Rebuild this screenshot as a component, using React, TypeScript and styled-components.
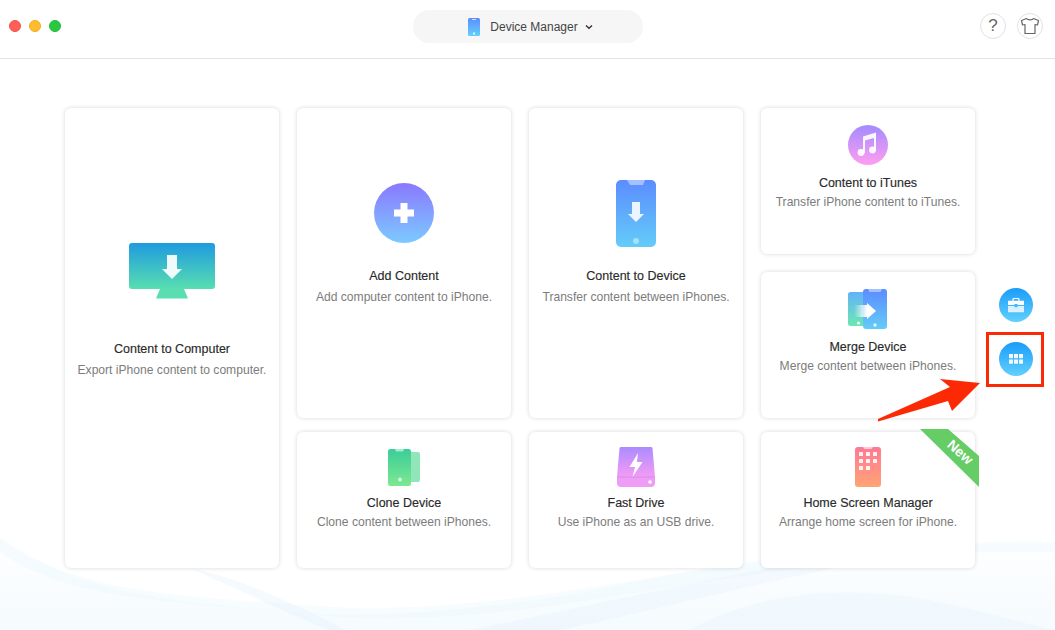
import React from "react";
import styled, { createGlobalStyle } from "styled-components";

const GlobalStyle = createGlobalStyle`
  html, body {
    margin: 0;
    padding: 0;
    background: #fff;
    font-family: "Liberation Sans", Arial, sans-serif;
  }
`;

const Page = styled.div`
  position: relative;
  width: 1055px;
  height: 630px;
  overflow: hidden;
  background: #fff;
`;

const Waves = styled.svg`
  position: absolute;
  left: 0;
  bottom: 0;
  width: 1055px;
  height: 130px;
`;

const TitleBar = styled.header`
  position: relative;
  height: 58px;
  border-bottom: 1px solid #e4e4e4;
  padding: 0 10px 0 11px;
  display: grid;
  grid-template-columns: 1fr 230px 1fr;
  align-items: center;
`;

const TrafficLights = styled.div`
  display: flex;
  gap: 8px;
  margin: -6px 0 0 -2px;
`;

const Light = styled.span<{ $color: string; $edge: string }>`
  width: 12px;
  height: 12px;
  border-radius: 50%;
  box-sizing: border-box;
  background: ${(p) => p.$color};
  border: 1px solid ${(p) => p.$edge};
`;

const Switcher = styled.div`
  height: 33px;
  margin-top: -6px;
  padding: 1px 0 0 5px;
  box-sizing: border-box;
  border-radius: 16px;
  background: #f6f6f6;
  display: flex;
  align-items: center;
  justify-content: center;
  gap: 10px;
  color: #444;
  font-size: 12px;
`;

const ChevronWrap = styled.span`
  display: flex;
  margin-left: -3px;
`;

const ToolButtons = styled.div`
  display: flex;
  justify-content: flex-end;
  gap: 11px;
  margin: -6px 2px 0 0;
`;

const RoundButton = styled.div`
  width: 26px;
  height: 26px;
  box-sizing: border-box;
  border: 1px solid #e2e2e2;
  border-radius: 50%;
  display: flex;
  align-items: center;
  justify-content: center;
  color: #666;
  font-size: 17px;
`;

const Main = styled.main`
  position: relative;
  display: flex;
  gap: 24px;
  padding: 49px 0 0 65px;
`;

const CardGrid = styled.div`
  display: grid;
  grid-template-columns: repeat(4, 214px);
  grid-template-rows: 146px 18px 146px 14px 136px;
  column-gap: 18px;
`;

const Card = styled.section<{ $rows: string; $column: number; $top: number }>`
  position: relative;
  grid-row: ${(p) => p.$rows};
  grid-column: ${(p) => p.$column};
  padding-top: ${(p) => p.$top}px;
  box-sizing: border-box;
  background: #fff;
  border-radius: 6px;
  box-shadow: 0 0 4px rgba(0, 0, 0, 0.16);
  display: flex;
  flex-direction: column;
  align-items: center;
  text-align: center;
`;

const CardTitle = styled.h3<{ $gap: number }>`
  margin: ${(p) => p.$gap}px 0 0;
  color: #2a2a2a;
  font-size: 12.5px;
  line-height: 16px;
  font-weight: 400;
  white-space: nowrap;
  -webkit-text-stroke: 0.15px #2a2a2a;
`;

const CardText = styled.p<{ $gap: number }>`
  margin: ${(p) => p.$gap}px 0 0;
  color: #7c7c7c;
  font-size: 12.1px;
  line-height: 16px;
  white-space: nowrap;
`;

const Ribbon = styled.div`
  position: absolute;
  top: -3px;
  right: -4px;
  width: 59px;
  height: 58px;
  background: #66cc66;
  clip-path: polygon(0 0, 28px 0, 59px 27px, 59px 58px);
`;

const RibbonLabel = styled.span`
  position: absolute;
  left: 26px;
  top: 15px;
  color: #fff;
  font-size: 14px;
  font-weight: 700;
  transform: rotate(42deg);
`;

const SideColumn = styled.aside`
  display: flex;
  flex-direction: column;
  gap: 20px;
  padding-top: 180px;
`;

const SideButton = styled.div<{ $highlighted?: boolean }>`
  position: relative;
  width: 34px;
  height: 34px;
  border-radius: 50%;
  background: linear-gradient(#1a9cf8, #62d0ff);
  display: flex;
  align-items: center;
  justify-content: center;

  ${(p) =>
    p.$highlighted &&
    `
    &::after {
      content: "";
      position: absolute;
      inset: -10px -11px -11px -13px;
      border: 3px solid #fb2a05;
    }
  `}
`;

const RedArrow = styled.svg`
  position: absolute;
  left: 878px;
  top: 379px;
  width: 102px;
  height: 43px;
`;

const DeviceIcon = () => (
  <svg width="12" height="18" viewBox="0 0 12 18">
    <defs>
      <linearGradient id="dev" x1="0" y1="0" x2="0" y2="1">
        <stop offset="0" stopColor="#5b8cff" />
        <stop offset="1" stopColor="#64d0fa" />
      </linearGradient>
    </defs>
    <rect width="12" height="18" rx="1.5" fill="url(#dev)" />
    <rect x="4" y="1" width="4" height="1" fill="#cfe0ff" />
    <rect x="5" y="14.5" width="2" height="2" fill="#e6f6ff" />
  </svg>
);

const Chevron = () => (
  <svg width="8" height="6" viewBox="0 0 8 6">
    <path d="M1 1.5 4 4.3 7 1.5" fill="none" stroke="#333" strokeWidth="1.4" />
  </svg>
);

const ShirtIcon = () => (
  <svg width="20" height="18" viewBox="0 0 20 18">
    <path
      d="M6.5 1.5 1.5 3.5 2.5 8 5 7.5V16.5H15V7.5L17.5 8 18.5 3.5 13.5 1.5C12.5 3.4 7.5 3.4 6.5 1.5Z"
      fill="none"
      stroke="#666"
      strokeWidth="1.2"
      strokeLinejoin="round"
    />
  </svg>
);

const ComputerIcon = () => (
  <svg width="86" height="56" viewBox="0 0 86 56">
    <defs>
      <linearGradient id="pc" x1="0" y1="0" x2="0" y2="1">
        <stop offset="0" stopColor="#1f9bdf" />
        <stop offset="1" stopColor="#58deb0" />
      </linearGradient>
    </defs>
    <rect width="86" height="46" rx="3" fill="url(#pc)" />
    <path d="M31 46H55L59 55.5H27Z" fill="#58deb0" />
    <path d="M38 12H48V26H53L43 36 33 26H38Z" fill="#fff" fillOpacity="0.92" />
  </svg>
);

const PlusIcon = () => (
  <svg width="60" height="60" viewBox="0 0 60 60">
    <defs>
      <linearGradient id="plus" x1="0" y1="0" x2="0" y2="1">
        <stop offset="0" stopColor="#8a78ff" />
        <stop offset="1" stopColor="#7ccaff" />
      </linearGradient>
    </defs>
    <circle cx="30" cy="30" r="30" fill="url(#plus)" />
    <path d="M26.5 20h7v6.5H40v7h-6.5V40h-7v-6.5H20v-7h6.5Z" fill="#fff" />
  </svg>
);

const PhoneIcon = () => (
  <svg width="40" height="67" viewBox="0 0 40 67">
    <defs>
      <linearGradient id="phone" x1="0" y1="0" x2="0" y2="1">
        <stop offset="0" stopColor="#5b8cff" />
        <stop offset="1" stopColor="#64ccf8" />
      </linearGradient>
    </defs>
    <rect width="40" height="67" rx="5" fill="url(#phone)" />
    <path d="M11 0H29L27 5H14Z" fill="#a4c0ff" />
    <path d="M16 22H24V34H28L20 42 12 34H16Z" fill="#fff" fillOpacity="0.88" />
    <circle cx="20" cy="61" r="3" fill="#a2e2fc" />
  </svg>
);

const MusicIcon = () => (
  <svg width="40" height="40" viewBox="0 0 40 40">
    <defs>
      <linearGradient id="music" x1="0" y1="0" x2="0" y2="1">
        <stop offset="0" stopColor="#a38bff" />
        <stop offset="1" stopColor="#ff9ef0" />
      </linearGradient>
    </defs>
    <circle cx="20" cy="20" r="20" fill="url(#music)" />
    <path d="M15 11.5 28 7.5V25H26V13L17 15.6V28H15Z" fill="#fff" fillOpacity="0.92" />
    <circle cx="13" cy="27.5" r="3.4" fill="#fff" fillOpacity="0.92" />
    <circle cx="24.5" cy="25" r="3.4" fill="#fff" fillOpacity="0.92" />
  </svg>
);

const MergeIcon = () => (
  <svg width="40" height="40" viewBox="0 0 40 40">
    <defs>
      <linearGradient id="mergeBack" x1="0" y1="0" x2="0" y2="1">
        <stop offset="0" stopColor="#62b2fa" />
        <stop offset="1" stopColor="#6ce8b0" />
      </linearGradient>
      <linearGradient id="mergeFront" x1="0" y1="0" x2="0" y2="1">
        <stop offset="0" stopColor="#5b8cff" />
        <stop offset="1" stopColor="#64ccf8" />
      </linearGradient>
      <linearGradient id="mergeFade" x1="0" y1="0" x2="1" y2="0">
        <stop offset="0" stopColor="#fff" stopOpacity="0" />
        <stop offset="1" stopColor="#fff" />
      </linearGradient>
    </defs>
    <rect y="3" width="18" height="34" rx="2.5" fill="url(#mergeBack)" />
    <circle cx="10.5" cy="34" r="1.6" fill="#e8fff5" />
    <rect x="15" width="24" height="40" rx="3" fill="url(#mergeFront)" />
    <path d="M20 0H34L32.5 3H21.5Z" fill="#a4c0ff" />
    <path d="M6 16H19V28H6Z" fill="url(#mergeFade)" />
    <path d="M19 14V30L28 22Z" fill="#fff" />
    <circle cx="27" cy="36" r="1.7" fill="#e2f6ff" />
  </svg>
);

const CloneIcon = () => (
  <svg width="32" height="38" viewBox="0 0 32 38">
    <defs>
      <linearGradient id="clone" x1="0" y1="0" x2="0" y2="1">
        <stop offset="0" stopColor="#3acd98" />
        <stop offset="1" stopColor="#7ee890" />
      </linearGradient>
    </defs>
    <rect x="18" y="3" width="14" height="30" rx="2" fill="#90e6b8" />
    <rect width="23" height="37" rx="2.5" fill="url(#clone)" />
    <path d="M7 0H16L15 2.5H8Z" fill="#a8ecd0" />
    <circle cx="12" cy="30.5" r="2" fill="#d8f8e4" />
  </svg>
);

const DriveIcon = () => (
  <svg width="38" height="40" viewBox="0 0 38 40">
    <defs>
      <linearGradient id="drive" x1="0" y1="0" x2="0" y2="1">
        <stop offset="0" stopColor="#ab8bff" />
        <stop offset="1" stopColor="#f49cf4" />
      </linearGradient>
    </defs>
    <path d="M4 0H34C35 0 35.4 .6 35.5 1.5L38 30H0L2.5 1.5C2.6 .6 3 0 4 0Z" fill="url(#drive)" />
    <path d="M0 30H38V36C38 38.5 36.5 40 34 40H4C1.5 40 0 38.5 0 36Z" fill="#ee9cf6" />
    <path d="M0 30H38" stroke="#c98bf0" strokeWidth="0.8" />
    <circle cx="33" cy="35" r="1.8" fill="#fff" />
    <path d="M21 6 12.5 20H18L15.5 30 25.5 15H20Z" fill="#fff" />
  </svg>
);

const HomeIcon = () => {
  const cells = [
    [4, 5], [11, 5], [18, 5],
    [4, 12], [11, 12], [18, 12],
    [4, 19], [11, 19],
  ];
  return (
    <svg width="26" height="40" viewBox="0 0 26 40">
      <defs>
        <linearGradient id="home" x1="0" y1="0" x2="0" y2="1">
          <stop offset="0" stopColor="#ff7894" />
          <stop offset="1" stopColor="#ffa474" />
        </linearGradient>
      </defs>
      <rect width="26" height="40" rx="3" fill="url(#home)" />
      <path d="M8 0H18L16.5 2H9.5Z" fill="#ffc8d4" />
      {cells.map(([x, y]) => (
        <rect key={`${x}-${y}`} x={x} y={y} width="4" height="4" rx="0.5" fill="#fff" fillOpacity="0.9" />
      ))}
    </svg>
  );
};

const ToolboxGlyph = () => (
  <svg width="18" height="15" viewBox="0 0 18 15">
    <path d="M6 3V1.5C6 .9 6.4 .5 7 .5H11C11.6 .5 12 .9 12 1.5V3" fill="none" stroke="#fff" strokeWidth="1.2" />
    <path d="M1 2.8H17V7H10.5V6H7.5V7H1Z" fill="#fff" />
    <path d="M1 8H7.5V9.2H10.5V8H17V14.2H1Z" fill="#fff" fillOpacity="0.8" />
  </svg>
);

const GridGlyph = () => (
  <svg width="14" height="10" viewBox="0 0 14 10">
    {[0, 5, 10].map((x) =>
      [0, 5.5].map((y) => (
        <rect key={`${x}-${y}`} x={x} y={y} width="4" height="4.2" fill="#fff" fillOpacity="0.92" />
      ))
    )}
  </svg>
);

export default function App() {
  return (
    <Page>
      <GlobalStyle />
      <Waves viewBox="0 500 1055 130" preserveAspectRatio="none">
        <defs>
          <linearGradient id="wash" x1="0" y1="0" x2="0" y2="1">
            <stop offset="0" stopColor="#eef8fe" stopOpacity="0" />
            <stop offset="1" stopColor="#eef8fe" stopOpacity="0.6" />
          </linearGradient>
        </defs>
        <path d="M0 530C60 590 150 600 290 612C340 618 480 615 620 585C760 555 880 540 1055 545V630H0Z" fill="url(#wash)" />
        <path d="M0 538C70 590 170 596 290 604C430 618 560 592 700 570C820 552 950 540 1055 542L1055 552C930 548 820 566 700 582C560 606 420 630 290 612C160 602 60 596 0 552Z" fill="#e8f5fd" fillOpacity="0.35" />
        <path d="M190 568C240 590 290 615 330 630H345C300 606 240 578 190 568Z" fill="#e0f0fb" fillOpacity="0.35" />
        <path d="M470 630C620 600 760 565 900 548L960 545C800 570 660 610 560 630Z" fill="#e4f1fc" fillOpacity="0.35" />
        <path d="M690 630C760 590 850 585 930 600C980 610 1030 625 1055 630Z" fill="#e8f5fd" fillOpacity="0.4" />
      </Waves>

      <TitleBar>
        <TrafficLights>
          <Light $color="#ff5f57" $edge="#f0544c" />
          <Light $color="#ffbd2e" $edge="#eeac20" />
          <Light $color="#28c940" $edge="#22ba36" />
        </TrafficLights>
        <Switcher>
          <DeviceIcon />
          <span>Device Manager</span>
          <ChevronWrap>
            <Chevron />
          </ChevronWrap>
        </Switcher>
        <ToolButtons>
          <RoundButton>?</RoundButton>
          <RoundButton>
            <ShirtIcon />
          </RoundButton>
        </ToolButtons>
      </TitleBar>

      <Main>
        <CardGrid>
          <Card $rows="1 / 6" $column={1} $top={135}>
            <ComputerIcon />
            <CardTitle $gap={42}>Content to Computer</CardTitle>
            <CardText $gap={5}>Export iPhone content to computer.</CardText>
          </Card>

          <Card $rows="1 / 4" $column={2} $top={75}>
            <PlusIcon />
            <CardTitle $gap={25}>Add Content</CardTitle>
            <CardText $gap={5}>Add computer content to iPhone.</CardText>
          </Card>

          <Card $rows="1 / 4" $column={3} $top={72}>
            <PhoneIcon />
            <CardTitle $gap={21}>Content to Device</CardTitle>
            <CardText $gap={5}>Transfer content between iPhones.</CardText>
          </Card>

          <Card $rows="1 / 2" $column={4} $top={17}>
            <MusicIcon />
            <CardTitle $gap={10}>Content to iTunes</CardTitle>
            <CardText $gap={3}>Transfer iPhone content to iTunes.</CardText>
          </Card>

          <Card $rows="3 / 4" $column={4} $top={17}>
            <MergeIcon />
            <CardTitle $gap={10}>Merge Device</CardTitle>
            <CardText $gap={3}>Merge content between iPhones.</CardText>
          </Card>

          <Card $rows="5 / 6" $column={2} $top={17}>
            <CloneIcon />
            <CardTitle $gap={8}>Clone Device</CardTitle>
            <CardText $gap={3}>Clone content between iPhones.</CardText>
          </Card>

          <Card $rows="5 / 6" $column={3} $top={15}>
            <DriveIcon />
            <CardTitle $gap={8}>Fast Drive</CardTitle>
            <CardText $gap={3}>Use iPhone as an USB drive.</CardText>
          </Card>

          <Card $rows="5 / 6" $column={4} $top={15}>
            <HomeIcon />
            <CardTitle $gap={8}>Home Screen Manager</CardTitle>
            <CardText $gap={3}>Arrange home screen for iPhone.</CardText>
            <Ribbon>
              <RibbonLabel>New</RibbonLabel>
            </Ribbon>
          </Card>
        </CardGrid>

        <SideColumn>
          <SideButton>
            <ToolboxGlyph />
          </SideButton>
          <SideButton $highlighted>
            <GridGlyph />
          </SideButton>
        </SideColumn>
      </Main>

      <RedArrow viewBox="0 0 102 43">
        <path d="M0 40 72 8 62 0 102 4 74 32 70 22 0 42.5Z" fill="#fb2a05" />
      </RedArrow>
    </Page>
  );
}
